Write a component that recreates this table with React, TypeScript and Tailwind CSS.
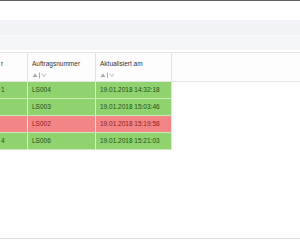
import React from 'react';

type Row = { kunde: string; auftrag: string; datum: string; status: 'ok' | 'error' };

const rows: Row[] = [
  { kunde: '1', auftrag: 'LS004', datum: '19.01.2018 14:32:18', status: 'ok' },
  { kunde: '', auftrag: 'LS003', datum: '19.01.2018 15:03:46', status: 'ok' },
  { kunde: '', auftrag: 'LS002', datum: '19.01.2018 15:19:58', status: 'error' },
  { kunde: '4', auftrag: 'LS006', datum: '19.01.2018 15:21:03', status: 'ok' },
];

function SortIcons() {
  return (
    <svg width="14" height="6" viewBox="0 0 14 6" className="mt-[3px]">
      <path d="M0.5 5 L3 1.5 L5.5 5 Z" fill="#a8a8a8" />
      <line x1="7.5" y1="0.5" x2="7.5" y2="6" stroke="#9a9a9a" strokeWidth="0.8" />
      <path d="M9.5 1.5 L12 4.5 L14 1.5" fill="none" stroke="#a8a8a8" strokeWidth="0.8" />
    </svg>
  );
}

export default function App() {
  return (
    <div className="w-[300px] h-[240px] bg-white overflow-hidden flex flex-col font-['Liberation_Sans',Arial,sans-serif] text-[6.5px]">
      <div className="h-px bg-[#606060]" />
      <div className="h-[19px]" />
      <div className="h-[15px] bg-[#f1f3f6]" />
      <div className="h-px bg-[#f9fafb]" />
      <div className="h-[14px] bg-[#f4f5f8]" />
      <div className="h-[2px]" />

      <div className="flex flex-col">
        <div className="flex h-[30px] border-y border-[#e4e4e4] bg-[#fdfdfd] text-[#333]">
          <div className="w-[28px] shrink-0 border-r border-[#e2e2e2] pl-[1px] pt-[6px]">
            r
          </div>
          <div className="w-[68px] shrink-0 border-r border-[#e2e2e2] pl-[4px] pt-[6px]">
            <div>Auftragsnummer</div>
            <SortIcons />
          </div>
          <div className="w-[76px] shrink-0 border-r border-[#e2e2e2] pl-[4px] pt-[6px]">
            <div>Aktualisiert am</div>
            <SortIcons />
          </div>
          <div className="flex-1" />
        </div>

        {rows.map((r) => {
          const ok = r.status === 'ok';
          const cell = ok ? 'bg-[#8fd26e] text-[#24511a]' : 'bg-[#f28585] text-[#8a1f1f]';
          return (
            <div key={r.auftrag} className="flex h-[17px] w-[172px] border-b border-[#c9e9b8]">
              <div className={`w-[28px] shrink-0 border-r border-[#d8f0cc] flex items-center pl-[1px] ${cell}`}>
                {r.kunde}
              </div>
              <div className={`w-[68px] shrink-0 border-r border-[#d8f0cc] flex items-center pl-[4px] ${cell}`}>
                {r.auftrag}
              </div>
              <div className={`w-[76px] shrink-0 border-r border-[#d8f0cc] flex items-center pl-[4px] ${cell}`}>
                {r.datum}
              </div>
            </div>
          );
        })}
      </div>

      <div className="flex-1" />
      <div className="h-px bg-[#dcdcdc]" />
      <div className="h-px" />
    </div>
  );
}
